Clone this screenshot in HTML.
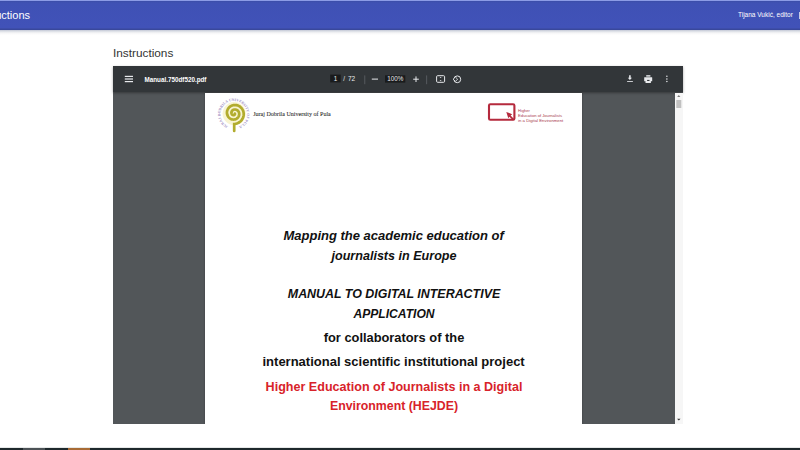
<!DOCTYPE html>
<html><head><meta charset="utf-8">
<style>
*{margin:0;padding:0;box-sizing:border-box}
html,body{width:800px;height:450px;overflow:hidden;background:#fff;font-family:"Liberation Sans",sans-serif;position:relative}
.abs{position:absolute}
#topline{left:0;top:0;width:800px;height:1px;background:#8b9be6}
#bar{left:0;top:1px;width:800px;height:28.5px;background:linear-gradient(#3a4ca6 0,#3e50b0 1px,#3f51b5 3px,#4152b8 26.5px,#39489c 28.5px)}
#shadow{left:0;top:29.5px;width:800px;height:5px;background:linear-gradient(#c3c8d6 0,#dfe2e8 1.5px,#f6f6f7 3px,#fff 5px)}
.t{white-space:nowrap;line-height:1}
#apptitle{color:#fff;font-size:11px;right:770px;top:9.5px}
#user{color:#fff;font-size:6.5px;left:738px;top:12.3px}
#pipe{left:799px;top:12px;width:1px;height:7px;background:#c5cae9}
#heading{color:#333;font-size:11.8px;left:113px;top:48px}
#viewer{left:113px;top:66px;width:570px;height:358px;background:#525659}
#tb{left:113px;top:66px;width:570px;height:26px;background:#323639;box-shadow:0 1px 2.5px rgba(0,0,0,.35)}
#page{left:205px;top:93px;width:377px;height:331px;background:#fff;box-shadow:0 0 2px rgba(0,0,0,.3)}
#sb{left:675px;top:92.5px;width:8px;height:331.5px;background:#f6f6f6}
.line{position:absolute;white-space:nowrap;line-height:1;font-size:13px;font-weight:bold;color:#111;left:-6.4px;width:800px;text-align:center;transform-origin:50% 0}
.it{font-style:italic}
.red{color:#d8232a}
#taskbar{left:0;top:447px;width:800px;height:3px;background:linear-gradient(#e6e8e8 0,#e6e8e8 1px,#1e282c 1px)}
#fname{color:#fff;font-weight:bold;font-size:6.3px;left:144.5px;top:77px}
.tbtxt{color:#e8eaed;font-size:6.3px}
svg{position:absolute;left:0;top:0}
</style></head><body>
<div class="abs" id="topline"></div>
<div class="abs" id="bar"></div>
<div class="abs" id="shadow"></div>
<div class="abs t" id="apptitle">Instructions</div>
<div class="abs t" id="user">Tijana Vukić, editor</div>
<div class="abs" id="pipe"></div>
<div class="abs t" id="heading">Instructions</div>

<div class="abs" id="viewer"></div>
<div class="abs" id="tb"></div>
<div class="abs" id="page"></div>
<div class="abs" id="sb"></div>
<div class="abs" style="left:100px;top:424px;width:600px;height:23px;background:#fff"></div>
<div class="abs t" id="fname">Manual.750df520.pdf</div>

<svg width="800" height="450" viewBox="0 0 800 450">
 <!-- hamburger -->
 <g fill="#e8eaed">
  <rect x="124.8" y="75.8" width="8.2" height="1.2"/>
  <rect x="124.8" y="78.4" width="8.2" height="1.2"/>
  <rect x="124.8" y="81" width="8.2" height="1.2"/>
 </g>
 <!-- page box -->
 <rect x="330.2" y="74.6" width="10.5" height="7.8" fill="#191b1c"/>
 <text x="335.4" y="81" font-size="6.3" fill="#e8eaed" text-anchor="middle" font-family="Liberation Sans">1</text>
 <text x="343.2" y="81" font-size="6.3" fill="#e8eaed" font-family="Liberation Sans">/</text><text x="347.9" y="81" font-size="6.5" fill="#e8eaed" font-family="Liberation Sans">72</text>
 <rect x="364.4" y="75.4" width="0.8" height="8.8" fill="#5f6368"/>
 <rect x="371.8" y="78.6" width="6.2" height="1" fill="#e8eaed"/>
 <rect x="385" y="75.3" width="20.3" height="7.3" fill="#191b1c"/>
 <text x="395.2" y="81" font-size="6.3" fill="#e8eaed" text-anchor="middle" font-family="Liberation Sans">100%</text>
 <rect x="413.2" y="78.7" width="5.6" height="1" fill="#e8eaed"/>
 <rect x="415.5" y="76.4" width="1" height="5.6" fill="#e8eaed"/>
 <rect x="426.3" y="75.4" width="0.8" height="8.8" fill="#5f6368"/>
 <!-- fit -->
 <rect x="436.6" y="75.7" width="8" height="6.6" rx="1" fill="none" stroke="#e8eaed" stroke-width="1"/>
 <path d="M440.6 76.9 l-1 1.1 h2 z M440.6 81.1 l-1 -1.1 h2 z" fill="#e8eaed"/>
 <!-- rotate -->
 <circle cx="457.3" cy="79.3" r="3.4" fill="none" stroke="#e8eaed" stroke-width="1"/>
 <path d="M453.2 79.2 l2.2 -2.2 l2.2 2.2 l-2.2 2.2 z" fill="#323639" stroke="#e8eaed" stroke-width="0.9"/>
 <!-- download -->
 <path d="M629.1 75.2 h1.6 v2.5 h1.3 l-2.1 2.2 l-2.1 -2.2 h1.3 z" fill="#e8eaed"/>
 <rect x="627.1" y="81" width="5.8" height="1" fill="#c8cacd"/>
 <!-- print -->
 <rect x="646.2" y="75.2" width="4.2" height="1.4" fill="#e8eaed"/>
 <path d="M644.5 77.3 h7.4 q0.3 0 0.3 0.3 v3.6 h-1.3 v1.8 h-5.4 v-1.8 h-1.3 v-3.6 q0 -0.3 0.3 -0.3 z" fill="#e8eaed"/>
 <rect x="647.1" y="79.9" width="2.4" height="1.1" fill="#323639"/>
 <!-- more -->
 <g fill="#e8eaed"><circle cx="666.9" cy="76.3" r="0.75"/><circle cx="666.9" cy="78.9" r="0.75"/><circle cx="666.9" cy="81.5" r="0.75"/></g>
 <!-- scrollbar -->
 <rect x="676.3" y="100" width="5" height="8" fill="#c1c1c1"/>
 <path d="M678.8 95.2 l1.6 1.6 h-3.2 z" fill="#505050"/>
 <path d="M678.8 420.4 l1.7 -1.7 h-3.4 z" fill="#3a3a3a"/>

 <!-- spiral logo -->
 <circle cx="234.2" cy="113.6" r="11.6" fill="#f8f4d2"/>
 <path id="ring" d="M228.08 126.25 A13.30 13.30 0 0 1 233.70 100.90 A13.30 13.30 0 0 1 239.32 126.25" fill="none"/><text font-family="Liberation Serif" font-size="3.7" font-weight="bold" fill="#a090c4"><textPath href="#ring" textLength="72.0" lengthAdjust="spacing">JURAJ DOBRILA UNIVERSITY OF PULA</textPath></text>
 <path d="M234.87 113.62 L234.90 113.70 L234.93 113.79 L234.94 113.88 L234.95 113.98 L234.94 114.09 L234.92 114.20 L234.89 114.31 L234.84 114.41 L234.78 114.52 L234.70 114.62 L234.61 114.72 L234.51 114.81 L234.39 114.90 L234.26 114.97 L234.12 115.03 L233.97 115.08 L233.81 115.12 L233.65 115.13 L233.48 115.14 L233.30 115.12 L233.12 115.09 L232.94 115.04 L232.76 114.97 L232.58 114.88 L232.41 114.77 L232.24 114.65 L232.09 114.50 L231.94 114.34 L231.81 114.16 L231.69 113.96 L231.59 113.75 L231.51 113.52 L231.45 113.29 L231.41 113.04 L231.39 112.78 L231.39 112.52 L231.42 112.26 L231.48 111.99 L231.55 111.73 L231.66 111.47 L231.79 111.21 L231.95 110.97 L232.13 110.73 L232.34 110.51 L232.56 110.30 L232.81 110.12 L233.09 109.95 L233.38 109.80 L233.68 109.68 L234.00 109.59 L234.34 109.53 L234.68 109.49 L235.03 109.49 L235.39 109.51 L235.74 109.57 L236.10 109.67 L236.45 109.79 L236.79 109.95 L237.12 110.14 L237.44 110.37 L237.74 110.62 L238.02 110.90 L238.27 111.22 L238.51 111.55 L238.71 111.92 L238.88 112.30 L239.02 112.70 L239.13 113.12 L239.19 113.55 L239.22 113.99 L239.22 114.43 L239.17 114.88 L239.08 115.33 L238.95 115.78 L238.77 116.21 L238.56 116.64 L238.31 117.04 L238.02 117.43 L237.70 117.80 L237.34 118.14 L236.94 118.45 L236.52 118.72 L236.07 118.96 L235.59 119.16 L235.10 119.33 L234.58 119.44 L234.05 119.52 L233.52 119.54 L232.97 119.52 L232.43 119.45 L231.89 119.33 L231.36 119.16 L230.83 118.95 L230.33 118.69 L229.84 118.38 L229.38 118.02 L228.95 117.63 L228.55 117.19 L228.19 116.71 L227.87 116.20 L227.59 115.66 L227.36 115.10 L227.17 114.51 L227.04 113.90 L226.96 113.27 L226.94 112.64 L226.97 112.00 L227.06 111.36 L227.21 110.72 L227.41 110.10 L227.67 109.49 L227.98 108.90 L228.35 108.34 L228.77 107.80 L229.24 107.31 L229.75 106.85 L230.30 106.43 L230.90 106.06 L231.53 105.74 L232.19 105.48 L232.87 105.27 L233.58 105.13 L234.30 105.04 L235.03 105.02 L235.77 105.06 L236.50 105.17 L237.23 105.34 L237.94 105.58 L238.64 105.88 L239.31 106.24 L239.96 106.67 L240.56 107.15 L241.13 107.69 L241.65 108.27 L242.12 108.91 L242.54 109.59 L242.90 110.31 L243.19 111.06 L243.42 111.84 L243.59 112.64 L243.68 113.46 L243.70 114.28 L243.65 115.12 L243.52 115.95 L243.33 116.77 L243.06 117.58 L242.71 118.36 L242.30 119.12 L241.82 119.84 L241.28 120.52 L240.67 121.16 L240.01 121.74 L239.30 122.27 L238.53 122.73 L237.73 123.13 L236.89 123.46 L236.01 123.72 L235.11 123.90 L234.20 124.00 L234.20 131" fill="none" stroke="#b2ac2e" stroke-width="2.7" stroke-linecap="round"/>
 <text x="253.2" y="116.3" font-size="6.05" fill="#2a2a2a" stroke="#2a2a2a" stroke-width="0.07" font-family="Liberation Serif">Juraj Dobrila University of Pula</text>

 <!-- HEJDE logo -->
 <rect x="489" y="104.2" width="25.4" height="15.6" rx="1.3" fill="none" stroke="#b52a3d" stroke-width="2.1"/>
 <path d="M506.3 111.9 L512.2 114.2 L510.6 115.6 L514.3 119.2 L513.1 120.4 L509.4 116.8 L508.3 118.2 Z" fill="#b52a3d"/>
 <g font-family="Liberation Sans" font-size="4.4" fill="#a83a4c">
  <text x="518.1" y="111.5" textLength="11.8" lengthAdjust="spacingAndGlyphs">Higher</text>
  <text x="518.1" y="116.6" textLength="43.9" lengthAdjust="spacingAndGlyphs">Education of Journalists</text>
  <text x="518.1" y="121.6" textLength="45.2" lengthAdjust="spacingAndGlyphs">in a Digital Environment</text>
 </g>
</svg>

<div class="line it" style="top:229px;transform:scaleX(1)">Mapping the academic education of</div>
<div class="line it" style="top:248.5px;transform:scaleX(.967)">journalists in Europe</div>
<div class="line it" style="top:287px;transform:scaleX(.956)">MANUAL TO DIGITAL INTERACTIVE</div>
<div class="line it" style="top:306.5px;transform:scaleX(.931)">APPLICATION</div>
<div class="line" style="top:331px;transform:scaleX(.988)">for collaborators of the</div>
<div class="line" style="top:355px;transform:scaleX(1)">international scientific institutional project</div>
<div class="line red" style="top:379.6px;transform:scaleX(.966)">Higher Education of Journalists in a Digital</div>
<div class="line red" style="top:399.3px;transform:scaleX(.949)">Environment (HEJDE)</div>

<div class="abs" id="taskbar"></div>
<div class="abs" style="left:22.5px;top:448px;width:22.5px;height:2px;background:#4c5256"></div>
<div class="abs" style="left:68px;top:448px;width:22px;height:2px;background:#a86b35"></div>
</body></html>
